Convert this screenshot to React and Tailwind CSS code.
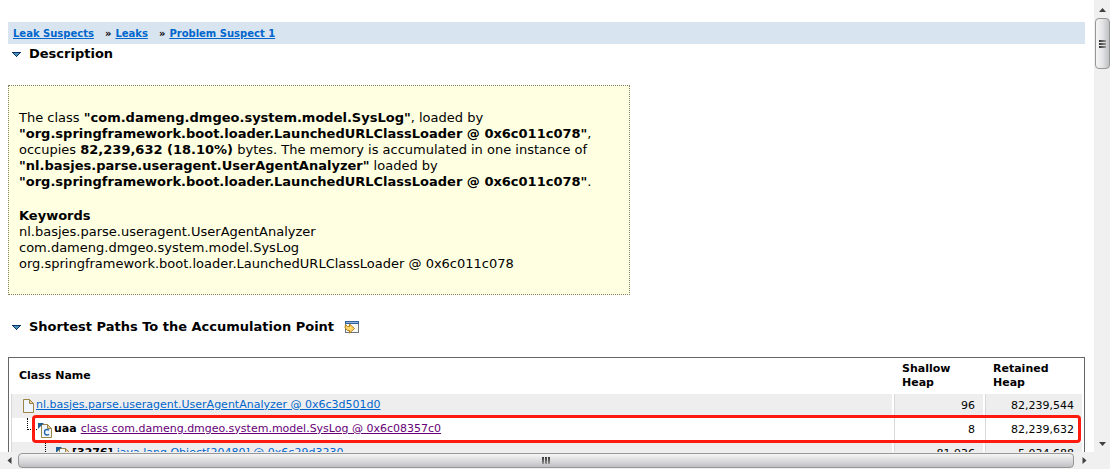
import React from "react";

function Twisty() {
  return (
    <svg width="9" height="5" viewBox="0 0 9 5" aria-hidden="true" className="block" shapeRendering="crispEdges">
      <path d="M0 0H9V1H8V2H7V3H6V4H5V5H4V4H3V3H2V2H1V1H0Z" fill="#0b2f6a" />
      <path d="M2 1H7V2H6V3H5V4H4V3H3V2H2Z" fill="#4795b5" />
    </svg>
  );
}

function OpenPaneIcon() {
  return (
    <svg width="16" height="14" viewBox="0 0 16 14" aria-hidden="true" className="block">
      <rect x="1.5" y="1.5" width="13" height="11" fill="#f7f8f4" stroke="#6e7480" />
      <rect x="1" y="1" width="14" height="3" fill="#2f5f9e" />
      <rect x="2" y="2" width="12" height="1" fill="#8fb4dd" />
      <path d="M1.500 4.500L3.500 6.500H5.500V4L10.500 8.500L5.500 13V10.500H3.500L1 8Z" fill="#ffd869" stroke="#b07d1c" />
    </svg>
  );
}

function PageShape() {
  return (
    <>
      <path d="M0.500 0.500H6.500L10.500 4.500V13.500H0.500Z" fill="#f1f5fd" stroke="#9c8546" />
      <path d="M6.500 0.500V4.500H10.500Z" fill="#e8d49a" stroke="#9c8546" />
    </>
  );
}

function FileIcon() {
  return (
    <svg width="11" height="14" viewBox="0 0 11 14" aria-hidden="true" className="block shrink-0">
      <PageShape />
    </svg>
  );
}

function RefIcon({ kind }) {
  return (
    <svg width="14" height="15" viewBox="0 0 14 15" aria-hidden="true" className="block shrink-0">
      <g transform="translate(3 1)">
        <PageShape />
      </g>
      <path d="M0 0H6L0 6Z" fill="#1f5f96" />
      {kind === "class" ? (
        <path d="M11 7.200Q10.200 6.500 9 6.500Q6.500 6.500 6.500 9.200T9 12Q10.200 12 11 11.200" fill="none" stroke="#2468a8" strokeWidth="1.300" />
      ) : (
        <path d="M7.500 6.500H6.500V12H7.500M10 6.500H11V12H10" fill="none" stroke="#2468a8" />
      )}
    </svg>
  );
}

function SectionTitle({ children, icon }) {
  return (
    <h2 className="flex h-5 items-center pl-1 text-[13px] font-bold leading-5">
      <button type="button" aria-label="Toggle section" className="mr-2">
        <Twisty />
      </button>
      {children}
      {icon}
    </h2>
  );
}

function Crumb({ children }) {
  return (
    <a href="#" className="text-[#0066cc] underline">
      {children}
    </a>
  );
}

function Separator() {
  return <span className="ml-[11px] mr-1">»</span>;
}

function NumberCell({ children }) {
  return <td className="border-l border-[#d8d8d8] pb-0 pl-0 pr-2 pt-px text-right">{children}</td>;
}

function Arrow({ d }) {
  return (
    <svg width="7" height="7" viewBox="0 0 7 7" aria-hidden="true" className="block">
      <path d={d} fill="#404040" />
    </svg>
  );
}

export default function App() {
  return (
    <div className="flex h-screen flex-col overflow-hidden bg-white font-['DejaVu_Sans',Verdana,sans-serif] text-black">
      <div className="flex min-h-0 flex-1">
        <main className="min-w-0 flex-1 overflow-hidden pl-2 pr-[9px] pt-[22px]">
          <nav aria-label="Breadcrumb" className="flex h-[22px] items-center bg-[#d8e5f0] px-[5px] text-[10px] font-bold">
            <Crumb>Leak Suspects</Crumb>
            <Separator />
            <Crumb>Leaks</Crumb>
            <Separator />
            <Crumb>Problem Suspect 1</Crumb>
          </nav>

          <SectionTitle>Description</SectionTitle>

          <section className="mt-[21px] w-[622px] max-w-full border border-dotted border-[#808060] bg-[#ffffe1] px-[10px] pb-[22px] pt-6 text-[13px] leading-4">
            <p>
              The class <b>"com.dameng.dmgeo.system.model.SysLog"</b>, loaded by
              <br />
              <b>"org.springframework.boot.loader.LaunchedURLClassLoader @ 0x6c011c078"</b>,
              <br />
              occupies <b>82,239,632 (18.10%)</b> bytes. The memory is accumulated in one instance of
              <br />
              <b>"nl.basjes.parse.useragent.UserAgentAnalyzer"</b> loaded by
              <br />
              <b>"org.springframework.boot.loader.LaunchedURLClassLoader @ 0x6c011c078"</b>.
            </p>
            <p className="mt-[18px]">
              <b>Keywords</b>
              <br />
              nl.basjes.parse.useragent.UserAgentAnalyzer
              <br />
              com.dameng.dmgeo.system.model.SysLog
              <br />
              org.springframework.boot.loader.LaunchedURLClassLoader @ 0x6c011c078
            </p>
          </section>

          <div className="mt-[22px]">
            <SectionTitle icon={<a href="#" aria-label="Open in new pane" className="ml-[10px]"><OpenPaneIcon /></a>}>
              Shortest Paths To the Accumulation Point
            </SectionTitle>
          </div>

          <table className="mt-5 w-full table-fixed border-separate border-spacing-x-[2px] border-spacing-y-0 border border-[#666666] text-[11px]">
            <colgroup>
              <col />
              <col className="w-[89px]" />
              <col className="w-[97px]" />
            </colgroup>
            <thead>
              <tr className="h-9 text-left leading-[14px]">
                <th className="pl-2">Class Name</th>
                <th className="pl-2">Shallow<br />Heap</th>
                <th className="pl-2">Retained<br />Heap</th>
              </tr>
            </thead>
            <tbody>
              <tr className="h-6 bg-[#eeeeee]">
                <td className="border-l border-[#d8d8d8] p-0">
                  <div className="flex h-6 items-center gap-[2px] pl-[11px]">
                    <FileIcon />
                    <a href="#" className="pb-[2px] text-[#0066cc] underline">nl.basjes.parse.useragent.UserAgentAnalyzer @ 0x6c3d501d0</a>
                  </div>
                </td>
                <NumberCell>96</NumberCell>
                <NumberCell>82,239,544</NumberCell>
              </tr>
              <tr className="relative h-6">
                <td className="border-l border-[#d8d8d8] p-0">
                  <div className="flex h-6 items-center pl-[15px]">
                    <span className="mr-px h-3 w-[10px] self-start border-b border-l border-dotted border-black" />
                    <RefIcon kind="class" />
                    <b className="ml-[2px] mr-1 pb-[2px]">uaa</b>
                    <a href="#" className="pb-[2px] text-[#660077] underline">class com.dameng.dmgeo.system.model.SysLog @ 0x6c08357c0</a>
                  </div>
                  <span className="pointer-events-none absolute -bottom-px -top-[3px] left-[21px] right-px rounded border-[3px] border-[#ff1a10]" />
                </td>
                <NumberCell>8</NumberCell>
                <NumberCell>82,239,632</NumberCell>
              </tr>
              <tr className="h-6 bg-[#eeeeee]">
                <td className="border-l border-[#d8d8d8] p-0">
                  <div className="flex h-6 items-center pl-[33px]">
                    <span className="mr-[10px] h-6 border-l border-dotted border-black" />
                    <RefIcon kind="array" />
                    <b className="ml-[2px] mr-1 pb-[2px]">[3276]</b>
                    <a href="#" className="pb-[2px] text-[#0066cc] underline">java.lang.Object[20480] @ 0x6c29d3230</a>
                  </div>
                </td>
                <NumberCell>81,936</NumberCell>
                <NumberCell>5,034,688</NumberCell>
              </tr>
            </tbody>
          </table>
        </main>

        <div className="flex w-4 flex-col items-center bg-[#f0f0f0]">
          <button type="button" aria-label="Scroll up" className="flex h-[18px] w-full items-center justify-center">
            <Arrow d="M3.500 2L7 6H0Z" />
          </button>
          <div className="flex h-[51px] w-[15px] flex-col items-center justify-center gap-px rounded-sm border border-[#979797] bg-linear-to-r from-[#f5f5f5] via-[#e4e4e6] to-[#c0c1c4]">
            <span className="h-[2px] w-[7px] bg-linear-to-r from-[#333333] to-[#999999]" />
            <span className="h-[2px] w-[7px] bg-linear-to-r from-[#333333] to-[#999999]" />
            <span className="h-[2px] w-[7px] bg-linear-to-r from-[#333333] to-[#999999]" />
          </div>
          <div className="flex-1" />
          <button type="button" aria-label="Scroll down" className="flex h-[17px] w-full items-center justify-center">
            <Arrow d="M0 2H7L3.500 6Z" />
          </button>
        </div>
      </div>

      <div className="flex h-[17px] shrink-0 items-center bg-[#f0f0f0] pr-4">
        <button type="button" aria-label="Scroll left" className="flex h-full w-[18px] items-center justify-center">
          <Arrow d="M5.500 0V7L1.500 3.500Z" />
        </button>
        <div className="flex h-[15px] flex-1 items-center justify-center gap-px rounded-sm border border-[#979797] bg-linear-to-b from-[#f5f5f5] via-[#dcdcde] to-[#c0c0c2]">
          <span className="h-[7px] w-[2px] bg-linear-to-b from-[#333333] to-[#999999]" />
          <span className="h-[7px] w-[2px] bg-linear-to-b from-[#333333] to-[#999999]" />
          <span className="h-[7px] w-[2px] bg-linear-to-b from-[#333333] to-[#999999]" />
        </div>
        <button type="button" aria-label="Scroll right" className="flex h-full w-5 items-center justify-center">
          <Arrow d="M1.500 0V7L5.500 3.500Z" />
        </button>
      </div>
    </div>
  );
}
